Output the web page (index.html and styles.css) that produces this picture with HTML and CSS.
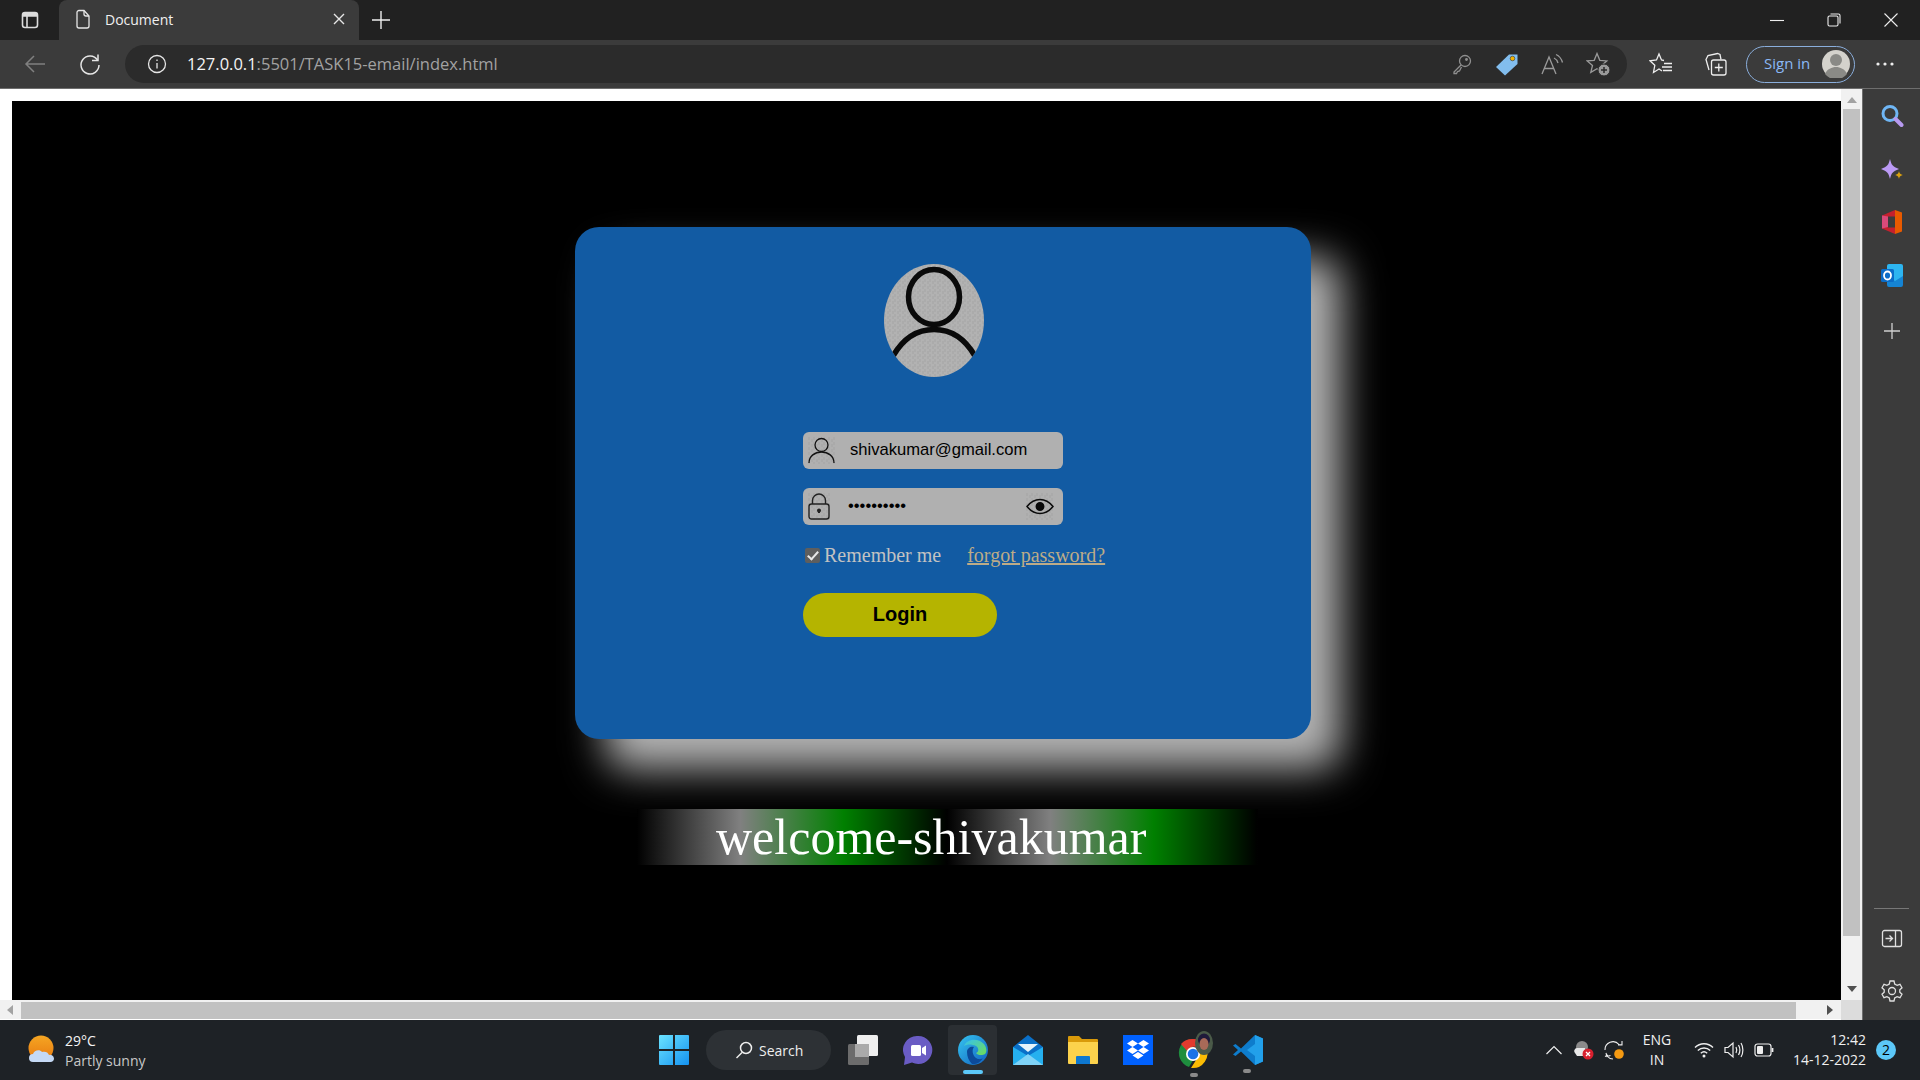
FILE: index.html
```html
<!DOCTYPE html>
<html lang="en">

<head>
    <title>Document</title>
    <meta charset="UTF-8">
    <link rel="stylesheet" href="styles.css">
</head>

<body>
    <div class="tabbar">
        <svg class="tab-toggle" width="20" height="20" viewBox="0 0 20 20" fill="none" stroke="#ddd" stroke-width="1.6"><rect x="2.5" y="2.5" width="15" height="15" rx="2.5"/><path d="M3 6h14M7 6v11" /><path d="M3 3h14v3H3z" fill="#ddd" stroke="none"/></svg>
        <div class="tab">
            <svg width="18" height="20" viewBox="0 0 18 20" fill="none" stroke="#e6e6e6" stroke-width="1.3"><path d="M3 3.5a2 2 0 0 1 2-2h5l5 5.500v10a2 2 0 0 1-2 2H5a2 2 0 0 1-2-2z"/><path d="M10 1.500v3.500a2 2 0 0 0 2 2h3"/></svg>
            <span class="tab-title">Document</span>
            <svg class="tab-close" width="12" height="12" viewBox="0 0 12 12" stroke="#e6e6e6" stroke-width="1.4"><path d="M1 1l10 10M11 1L1 11"/></svg>
        </div>
        <svg class="tab-new" width="20" height="20" viewBox="0 0 20 20" stroke="#eee" stroke-width="1.4"><path d="M10 1v18M1 10h18"/></svg>
        <div class="window-controls">
            <div class="window-btn"><svg width="14" height="14" viewBox="0 0 14 14" stroke="#eee" stroke-width="1.1"><path d="M0 7.500h14"/></svg></div>
            <div class="window-btn"><svg width="14" height="14" viewBox="0 0 14 14" fill="none" stroke="#eee" stroke-width="1.1"><rect x="1" y="3" width="10" height="10" rx="1.500"/><path d="M3.500 1h8a1.500 1.500 0 0 1 1.500 1.500v8"/></svg></div>
            <div class="window-btn"><svg width="14" height="14" viewBox="0 0 14 14" stroke="#eee" stroke-width="1.1"><path d="M.5.5l13 13M13.500.5l-13 13"/></svg></div>
        </div>
    </div>

    <div class="toolbar">
        <svg class="tool-back" width="24" height="24" viewBox="0 0 24 24" fill="none" stroke="#808080" stroke-width="1.500"><path d="M22 12H3M11 4l-8 8 8 8"/></svg>
        <svg class="tool-reload" width="24" height="24" viewBox="0 0 24 24" fill="none" stroke="#e6e6e6" stroke-width="1.500"><path d="M19.500 8A9 9 0 1 0 21 13"/><path d="M20 2.500V8.500h-6"/></svg>
        <div class="address">
            <svg class="address-info" width="20" height="20" viewBox="0 0 20 20" fill="none" stroke="#e6e6e6" stroke-width="1.300"><circle cx="10" cy="10" r="8.500"/><path d="M10 9v5.500M10 5.500v1.500"/></svg>
            <span class="address-host">127.0.0.1</span><span class="address-path">:5501/TASK15-email/index.html</span>
            <div class="address-tools">
                <svg width="24" height="24" viewBox="0 0 24 24" fill="none" stroke="#8f8f8f" stroke-width="1.300"><circle cx="15" cy="9" r="5.500"/><path d="M11 13l-7 7v1.500h2.500l1-2 2-.5 2-4"/><circle cx="16.500" cy="7.500" r=".8" fill="#8f8f8f"/></svg>
                <svg width="24" height="24" viewBox="0 0 24 24"><path d="M1 15L14 2.500h8.500V12L10 23.500z" fill="#82bdee"/><circle cx="17.500" cy="6.500" r="2.300" fill="#f2b200" stroke="#333" stroke-width=".6"/></svg>
                <svg width="24" height="24" viewBox="0 0 24 24" fill="none" stroke="#9a9a9a" stroke-width="1.300"><path d="M1 22L8 5l7 17M3.500 16.500h9"/><path d="M13 6c2 1 3.500 3 4 5M15 2.500c3.500 1.500 5.500 4.500 6.500 8"/></svg>
                <svg width="24" height="24" viewBox="0 0 24 24" fill="none" stroke="#9a9a9a" stroke-width="1.300"><path d="M11 1.500l2.800 6.800 7 .6-5.300 4.600 1.700 6.900L11 16.800l-6.200 3.600 1.700-6.900L1.200 8.900l7-.6z"/><circle cx="18" cy="18" r="6" fill="#9a9a9a" stroke="#2b2b2b" stroke-width="1"/><path d="M18 15v6M15 18h6" stroke="#2b2b2b" stroke-width="1.500"/></svg>
            </div>
        </div>
        <svg class="tool-fav" width="24" height="24" viewBox="0 0 24 24" fill="none" stroke="#eee" stroke-width="1.300"><path d="M15 8.500l-2.500-.5L10 2 7.500 8 1 8.800l4.800 4.500-1.300 7.200 5.500-3.500 3 2"/><path d="M15 11.500h8M13 15h10M14 18.500h9"/></svg>
        <svg class="tool-collect" width="24" height="24" viewBox="0 0 24 24" fill="none" stroke="#eee" stroke-width="1.300"><rect x="7.500" y="8" width="14.500" height="15" rx="2"/><path d="M14.800 11.500v8M10.800 15.500h8"/><path d="M5 18L2 7.500 4 3.500l9.500-2 2.500 1 1 5"/></svg>
        <div class="signin">
            <span class="signin-text">Sign in</span>
            <svg class="signin-avatar" width="28" height="28" viewBox="0 0 28 28"><circle cx="14" cy="14" r="14" fill="#d4d2cc"/><circle cx="14" cy="10" r="6" fill="#8a8a86"/><path d="M3 24c2-5 7-7 11-7s9 2 11 7a14 14 0 0 1-22 0z" fill="#8a8a86"/></svg>
        </div>
        <svg class="tool-more" width="24" height="24" viewBox="0 0 24 24" fill="#eee"><circle cx="5" cy="12" r="1.600"/><circle cx="12" cy="12" r="1.600"/><circle cx="19" cy="12" r="1.600"/></svg>
    </div>

    <div class="main">
        <div class="browser">
            <div class="browser-top">
                <div class="page">
                    <div class="stage">
                        <form class="card">
                            <div class="avatar">
                                <svg width="100" height="113" viewBox="0 0 100 113" fill="none" stroke="#0a0a0a" stroke-width="5.500"><ellipse cx="50" cy="33" rx="25.500" ry="27.500"/><path d="M9 92C20 73 35 65.500 50 65.500S80 73 91 92"/></svg>
                            </div>
                            <label class="field">
                                <svg class="field-icon" width="27" height="27" viewBox="0 0 27 27" fill="none" stroke="#111" stroke-width="1.300"><circle cx="13.500" cy="8" r="6.500"/><path d="M1 26c0-7 6-11 12.500-11S26 19 26 26"/></svg>
                                <input class="field-input" type="text" value="shivakumar@gmail.com">
                            </label>
                            <label class="field">
                                <svg class="field-icon field-icon-lock" width="22" height="27" viewBox="0 0 22 27" fill="none" stroke="#222" stroke-width="1.400"><rect x="1" y="11" width="20" height="15" rx="2.500"/><path d="M4.500 11V7.500a6.500 6.500 0 0 1 13 0V11"/><path d="M11 17v3" stroke-width="2"/><circle cx="11" cy="17.500" r="1.300" fill="#222"/></svg>
                                <input class="field-input field-input-pass" type="password" value="shivakumar">
                                <svg class="field-eye" width="28" height="27" viewBox="0 0 28 27" fill="none" stroke="#0a0a0a" stroke-width="1.500"><path d="M1 13.500C5 8.500 9 6.500 14 6.500s9 2 13 7c-4 5-8 7-13 7s-9-2-13-7z"/><circle cx="14" cy="13.500" r="3.700" fill="#0a0a0a"/></svg>
                            </label>
                            <div class="remember">
                                <input class="remember-check" type="checkbox" checked>
                                <span class="remember-text">Remember me</span>
                                <a class="forgot" href="#">forgot password?</a>
                            </div>
                            <button class="login" type="button">Login</button>
                        </form>
                        <div class="welcome">welcome-shivakumar</div>
                    </div>
                </div>
                <div class="vscroll">
                    <div class="arrow-up"></div>
                    <div class="vthumb"></div>
                    <div class="arrow-down"></div>
                </div>
            </div>
            <div class="hscroll">
                <div class="arrow-left"></div>
                <div class="hthumb"></div>
                <div class="arrow-right"></div>
                <div class="scroll-corner"></div>
            </div>
        </div>
        <div class="sidebar">
            <svg width="24" height="24" viewBox="0 0 24 24" fill="none"><circle cx="10" cy="9.500" r="7" stroke="#6fb6f5" stroke-width="3"/><path d="M15.500 15l6 6" stroke="#b79af0" stroke-width="4" stroke-linecap="round"/></svg>
            <svg class="sidebar-spark" width="24" height="24" viewBox="0 0 24 24"><path d="M10 1c1.500 6 2.500 7.500 9 10-6.500 2.500-7.500 4-9 10-1.500-6-2.500-7.500-9-10 6.500-2.500 7.500-4 9-10z" fill="#bb9af5"/><path d="M19 13c.5 2.500 1 3 4 4-3 1-3.500 1.500-4 4-.5-2.500-1-3-4-4 3-1 3.500-1.500 4-4z" fill="#d9a010"/></svg>
            <svg width="24" height="24" viewBox="0 0 24 24"><path d="M2 5.500L15 0v24L2 18.500z" fill="#c4202e"/><path d="M15 0l7 2.500v19L15 24z" fill="#e85a00"/><path d="M8 6.500h7v11H8z" fill="#3c3c3c"/><path d="M2 5.500L8 6.500v10.500l-6 1.500z" fill="#d94a7a"/></svg>
            <svg width="24" height="24" viewBox="0 0 24 24"><rect x="7" y="1" width="16" height="21" rx="2" fill="#2db5f0"/><path d="M7 13l8 5 8-5v9a2 2 0 0 1-2 2H9a2 2 0 0 1-2-2z" fill="#1584d4"/><rect x="1" y="6" width="13" height="13" rx="1.500" fill="#0a6cc8"/><ellipse cx="7.500" cy="12.500" rx="3.500" ry="4" fill="none" stroke="#fff" stroke-width="1.800"/></svg>
            <svg class="sidebar-plus" width="24" height="24" viewBox="0 0 24 24" stroke="#d0d0d0" stroke-width="1.300"><path d="M12 4v16M4 12h16"/></svg>
            <div class="sidebar-bottom">
                <div class="sidebar-line"></div>
                <svg width="22" height="22" viewBox="0 0 22 22" fill="none" stroke="#e0e0e0" stroke-width="1.300"><rect x="1.500" y="2.500" width="19" height="16" rx="2"/><path d="M14.500 2.500v16"/><path d="M4.500 10.500h7M8.500 7.500l3 3-3 3"/></svg>
                <svg width="24" height="24" viewBox="0 0 24 24" fill="none" stroke="#e0e0e0" stroke-width="1.300"><circle cx="12" cy="12" r="3.500"/><path d="M10 2h4l.7 3 2.400 1.300 2.900-1 2 3.500-2.200 2.100v2.200l2.200 2.100-2 3.500-2.900-1-2.400 1.300-.7 3h-4l-.7-3-2.400-1.300-2.900 1-2-3.500 2.200-2.100v-2.200L2 8.800l2-3.500 2.900 1L9.300 5z"/></svg>
            </div>
        </div>
    </div>

    <div class="taskbar">
        <div class="weather">
            <svg width="30" height="30" viewBox="0 0 30 30"><defs><linearGradient id="sun" x1="0" y1="0" x2="0" y2="1"><stop offset="0" stop-color="#f5a623"/><stop offset="1" stop-color="#e87a10"/></linearGradient></defs><circle cx="13" cy="13" r="12.500" fill="url(#sun)"/><path d="M5 27a4 4 0 0 1 0-8c1-4 7-5 9-2 3-1 6 0 7 3a4 4 0 0 1 5 3.500c0 2-1.500 3.500-3.500 3.500z" fill="#c5d9f5"/></svg>
            <div class="weather-text">
                <div class="weather-temp">29°C</div>
                <div class="weather-desc">Partly sunny</div>
            </div>
        </div>
        <div class="apps">
            <svg class="app-start" width="30" height="30" viewBox="0 0 30 30"><defs><linearGradient id="win" x1="0" y1="0" x2="1" y2="1"><stop offset="0" stop-color="#6be3ff"/><stop offset="1" stop-color="#1492f0"/></linearGradient></defs><path d="M0 1a1 1 0 0 1 1-1h13v14H0zM16 0h13a1 1 0 0 1 1 1v13H16zM0 16h14v14H1a1 1 0 0 1-1-1zM16 16h14v13a1 1 0 0 1-1 1H16z" fill="url(#win)"/></svg>
            <div class="search">
                <svg width="18" height="18" viewBox="0 0 18 18" fill="none" stroke="#eee" stroke-width="1.500"><circle cx="11" cy="7" r="5.500"/><path d="M7 11.500L1.500 17"/></svg>
                <span>Search</span>
            </div>
            <svg class="app-taskview" width="30" height="30" viewBox="0 0 30 30"><rect x="0" y="9" width="21" height="21" rx="1.500" fill="#6c6c6c"/><rect x="9" y="0" width="21" height="21" rx="1.500" fill="#efefef"/><rect x="7" y="9" width="14" height="13" fill="#aaa"/></svg>
            <svg class="app-teams" width="30" height="30" viewBox="0 0 30 30"><path d="M15 1a14 14 0 1 1-6 26.500L1 30l1-8A14 14 0 0 1 15 1z" fill="#6a5cc4"/><rect x="8" y="10" width="10" height="11" rx="1.500" fill="#fff"/><path d="M19 13l4-2.500v10L19 18z" fill="#fff"/></svg>
            <div class="app-edge">
                <svg width="30" height="30" viewBox="0 0 30 30"><defs><linearGradient id="edge" x1="0" y1="0" x2="1" y2="1"><stop offset="0" stop-color="#36c5f0"/><stop offset="1" stop-color="#1060c0"/></linearGradient><linearGradient id="edge2" x1="0" y1="0" x2="1" y2="1"><stop offset="0" stop-color="#35c1f1"/><stop offset="1" stop-color="#6fdd55"/></linearGradient></defs><circle cx="15" cy="15" r="15" fill="url(#edge)"/><path d="M6 11C8 4 20 2 26 9c3 4 3 8 1 10-3 2-8 1-9-1 3-1 3-5 0-7-4-2-9-2-12 0z" fill="url(#edge2)"/><path d="M9 17c0-4 4-6 7-5-2 2-2 8 2 11 3 2 6 1 7 0-3 5-8 7-11 6-3-3-5-7-5-12z" fill="#0c4a9a"/></svg>
                <div class="app-active"></div>
            </div>
            <svg class="app-mail" width="30" height="30" viewBox="0 0 30 30"><path d="M0 12L15 0l15 12v17H0z" fill="#0a70c8"/><path d="M0 12l15 9 15-9v18H0z" fill="#25b0ef"/><path d="M5 9h20l-10 8z" fill="#e5f3fb"/><path d="M0 30l15-11 15 11z" fill="#7fd3f7"/></svg>
            <svg class="app-folder" width="30" height="30" viewBox="0 0 30 30"><path d="M0 2a1 1 0 0 1 1-1h10l3 3h15a1 1 0 0 1 1 1v5H0z" fill="#d99a0a"/><path d="M0 7h30v21a1 1 0 0 1-1 1H1a1 1 0 0 1-1-1z" fill="#fcd24c"/><path d="M9 21h12a1 1 0 0 1 1 1v7H8v-7a1 1 0 0 1 1-1z" fill="#0e78d0"/></svg>
            <svg class="app-dropbox" width="30" height="30" viewBox="0 0 30 30"><rect width="30" height="30" fill="#0061fe"/><path d="M9.500 5l5.500 3.500L9.500 12 4 8.500zM20.500 5L26 8.500 20.500 12 15 8.500zM9.500 12l5.500 3.500L9.500 19 4 15.500zM20.500 12l5.500 3.500-5.500 3.500-5.500-3.500zM15 17l5.500 3.500L15 24l-5.500-3.500z" fill="#fff"/></svg>
            <div class="app-chrome">
                <svg width="36" height="38" viewBox="0 0 36 38"><path d="M15 8a15 15 0 0 1 13 7.500H15z" fill="#e33b2e"/><path d="M2.500 15A15 15 0 0 0 11 36l6-10-8-5z" fill="#1e8e3e"/><path d="M28 15.500A15 15 0 0 1 13 37l7-11 1-10.500z" fill="#fbbc04"/><path d="M15 8a15 15 0 0 0-12.500 7l7 7.500L15 15.500z" fill="#1e8e3e"/><path d="M15 8a15 15 0 0 1 12.500 7.500H15L9 20 3 13A15 15 0 0 1 15 8z" fill="#e33b2e"/><circle cx="15" cy="23" r="7" fill="#fff"/><circle cx="15" cy="23" r="5.300" fill="#1a73e8"/><ellipse cx="26" cy="12" rx="9" ry="12" fill="#4a5a48"/><ellipse cx="26" cy="9" rx="6" ry="6.500" fill="#1f1a3a"/><ellipse cx="26" cy="13" rx="4.500" ry="6" fill="#a86a58"/></svg>
                <div class="app-dot"></div>
            </div>
            <div class="app-vscode">
                <svg width="31" height="30" viewBox="0 0 31 30"><path d="M22 0l8 3.500v23L22 30 8 16.500 2.500 21 0 19.500 5 15 0 10.500 2.500 9 8 13.500z" fill="#0e7ccc"/><path d="M22 0l8 3.500v23L22 30V21l-8-6 8-6z" fill="#22a0ea"/></svg>
                <div class="app-dot"></div>
            </div>
        </div>
        <div class="tray">
            <svg class="tray-chevron" width="16" height="10" viewBox="0 0 16 10" fill="none" stroke="#eee" stroke-width="1.200"><path d="M.5 9L8 1.500 15.500 9"/></svg>
            <svg class="tray-cloud" width="20" height="20" viewBox="0 0 20 20"><circle cx="8" cy="7" r="6" fill="#8a8a8a"/><path d="M1 13a3 3 0 0 1 2-5h8v8H3z" fill="#e8e8e8"/><circle cx="14" cy="14" r="5.500" fill="#d8202e"/><path d="M12 12l4 4M16 12l-4 4" stroke="#fff" stroke-width="1.300"/></svg>
            <svg class="tray-sync" width="20" height="20" viewBox="0 0 20 20" fill="none" stroke="#eee" stroke-width="1.100"><path d="M1 10a8 8 0 0 1 14-5.500l3 .5M18 1v4h-4"/><path d="M4 15l-3 1.500M2 13l1 3.500 3.500-1M3 16a8 8 0 0 0 6 3"/><circle cx="15" cy="14" r="4.800" fill="#f59a12" stroke="none"/></svg>
            <div class="tray-lang"><div>ENG</div><div>IN</div></div>
            <svg class="tray-wifi" width="20" height="16" viewBox="0 0 20 16" fill="none" stroke="#eee" stroke-width="1.400"><path d="M1 5.500c5-5 13-5 18 0M3.800 8.500c3.500-3.300 9-3.300 12.400 0M6.800 11.200c2-1.700 4.400-1.700 6.400 0"/><circle cx="10" cy="14" r="1.500" fill="#eee" stroke="none"/></svg>
            <svg class="tray-sound" width="20" height="18" viewBox="0 0 20 18" fill="none" stroke="#eee" stroke-width="1.200"><path d="M1 6.500h3L9 2v14l-5-4.500H1z"/><path d="M12 6c1 2 1 4 0 6M14.500 4c1.700 3 1.700 7 0 10M17 2c2.500 4 2.500 10 0 14"/></svg>
            <svg class="tray-battery" width="20" height="14" viewBox="0 0 20 14" fill="none" stroke="#eee" stroke-width="1.200"><rect x="1" y="1" width="16" height="12" rx="2.500"/><rect x="3" y="3" width="6" height="8" rx="1" fill="#eee" stroke="none"/><path d="M18.500 5v4" stroke-width="1.800"/></svg>
            <div class="tray-clock"><div>12:42</div><div>14-12-2022</div></div>
            <div class="tray-badge">2</div>
        </div>
    </div>
</body>

</html>
```

FILE: styles.css
```css
* {
    box-sizing: border-box;
}

html,
body {
    height: 100%;
}

body {
    margin: 0;
    height: 1080px;
    overflow: hidden;
    display: flex;
    flex-direction: column;
    background: #000;
    font-family: "Open Sans", "Noto Sans", sans-serif;
    color: #eee;
}

svg {
    display: block;
    flex: none;
}

/* browser tabs */
.tabbar {
    height: 40px;
    background: #212121;
    display: flex;
    align-items: center;
}

.tab-toggle {
    margin-left: 20px;
}

.tab {
    height: 40px;
    width: 300px;
    margin-left: 19px;
    padding: 0 14px 2px 15px;
    background: #3b3b3b;
    border-radius: 8px 8px 0 0;
    display: flex;
    align-items: center;
}

.tab-title {
    margin-left: 13px;
    font-size: 14px;
    color: #f0f0f0;
}

.tab-close {
    margin-left: auto;
}

.tab-new {
    margin-left: 12px;
}

.window-controls {
    margin-left: auto;
    padding-right: 1px;
    display: flex;
}

.window-btn {
    width: 57px;
    height: 40px;
    display: flex;
    align-items: center;
    justify-content: center;
}

/* address bar */
.toolbar {
    height: 49px;
    background: #3b3b3b;
    border-bottom: 1px solid #6e6e6e;
    display: flex;
    align-items: center;
}

.tool-back {
    margin-left: 23px;
}

.tool-reload {
    margin-left: 31px;
}

.address {
    width: 1502px;
    height: 38px;
    margin-left: 23px;
    padding: 0 17px 0 22px;
    background: #2b2b2b;
    border-radius: 19px;
    display: flex;
    align-items: center;
    font-size: 16.500px;
}

.address-info {
    margin-right: 20px;
}

.address-host {
    margin-bottom: 2px;
    color: #f4f4f4;
}

.address-path {
    margin-bottom: 2px;
    color: #a2a2a2;
}

.address-tools {
    margin-left: auto;
    display: flex;
    gap: 21.500px;
}

.tool-fav {
    margin-left: 22px;
}

.tool-collect {
    margin-left: 31px;
}

.signin {
    width: 109px;
    height: 37px;
    margin-left: 18px;
    padding: 0 4px 0 17px;
    border: 1px solid #8aaedc;
    border-radius: 19px;
    display: flex;
    align-items: center;
    justify-content: space-between;
    font-size: 15px;
    color: #8ab8f5;
}

.signin-text {
    margin-bottom: 2px;
}

.tool-more {
    margin-left: 18px;
}

/* page + scrollbars */
.main {
    height: 931px;
    display: flex;
}

.browser {
    width: 1862px;
    display: flex;
    flex-direction: column;
}

.browser-top {
    height: 911px;
    display: flex;
}

.page {
    width: 1841px;
    padding: 12px 0 0 12px;
    background: #fff;
}

.stage {
    height: 899px;
    background: #000;
    overflow: hidden;
}

.card {
    width: 736px;
    height: 512px;
    margin: 126px 0 0 563px;
    padding: 37px 0 0 228px;
    background: #125ba3;
    border-radius: 24px;
    box-shadow: 30px 30px 40px #b4b4b4;
}

.avatar {
    width: 100px;
    height: 113px;
    margin-left: 81px;
    margin-bottom: 55px;
    border-radius: 50%;
    overflow: hidden;
    background: repeating-conic-gradient(#b2b2b2 0 25%, #ababab 0 50%) 0 0 / 5px 5px;
}

.field {
    width: 260px;
    height: 37px;
    margin-bottom: 19px;
    padding: 0 9px 0 5px;
    background: #b0b0b0;
    border-radius: 6px;
    display: flex;
    align-items: center;
}

.field-icon,
.field-eye {
    background: repeating-conic-gradient(#b0b0b0 0 25%, #aaa 0 50%) 0 0 / 5px 5px;
}

.field-input {
    flex: 1;
    min-width: 0;
    height: 100%;
    margin-left: 15px;
    padding: 0 0 2px;
    border: 0;
    outline: 0;
    background: none;
    font-family: "Liberation Sans", Arial, sans-serif;
    font-size: 16.600px;
    color: #000;
}

.field-input-pass {
    margin-left: 18px;
}

.remember {
    margin: 21px 0 0 2px;
    height: 18px;
    display: flex;
    align-items: center;
    font-family: "Liberation Serif", "Times New Roman", serif;
    font-size: 20px;
    color: #c2c2c2;
}

.remember-check {
    appearance: none;
    width: 15px;
    height: 15px;
    margin: 0 4px 0 0;
    background: #5e5e5e;
    border-radius: 2px;
    display: flex;
    align-items: center;
    justify-content: center;
}

.remember-check::after {
    content: "";
    width: 4px;
    height: 9px;
    margin-top: -2px;
    border: solid #e8e8e8;
    border-width: 0 2.500px 2.500px 0;
    transform: rotate(42deg);
}

.forgot {
    margin-left: 26px;
    color: #bcab88;
}

.login {
    display: block;
    width: 194px;
    height: 44px;
    margin-top: 29px;
    padding: 0 0 2px;
    border: 0;
    border-radius: 22px;
    background: #b5b400;
    font-family: "Liberation Sans", Arial, sans-serif;
    font-size: 20px;
    font-weight: bold;
    color: #000;
}

.welcome {
    width: 621px;
    height: 56px;
    margin: 70px 0 0 625px;
    padding-left: 79px;
    background: linear-gradient(to right, #000, #808080, #008000, #000) 0 0 / 310px 100%;
    font-family: "Liberation Serif", "Times New Roman", serif;
    font-size: 50px;
    line-height: 56px;
    color: #fff;
}

.vscroll {
    width: 21px;
    padding: 0 2px;
    background: #f1f1f1;
    display: flex;
    flex-direction: column;
    align-items: center;
}

.vthumb {
    width: 17px;
    height: 827px;
    margin: 6px 0 50px;
    background: #c1c1c1;
}

.arrow-up,
.arrow-down {
    width: 0;
    height: 0;
    border-left: 5px solid transparent;
    border-right: 5px solid transparent;
}

.arrow-up {
    margin-top: 8px;
    border-bottom: 6px solid #a3a3a3;
}

.arrow-down {
    border-top: 6px solid #505050;
}

.hscroll {
    height: 20px;
    background: #f1f1f1;
    border-bottom: 1px solid #fff;
    display: flex;
    align-items: center;
    position: relative;
}

.arrow-left,
.arrow-right {
    width: 0;
    height: 0;
    border-top: 5px solid transparent;
    border-bottom: 5px solid transparent;
}

.arrow-left {
    margin-left: 7px;
    border-right: 6px solid #a3a3a3;
}

.hthumb {
    width: 1775px;
    height: 17px;
    margin: 2px 0 0 8px;
    background: #c1c1c1;
}

.arrow-right {
    margin-left: 31px;
    border-left: 6px solid #505050;
}

.scroll-corner {
    width: 21px;
    height: 20px;
    margin-left: auto;
    background: #dcdcdc;
}

/* edge sidebar */
.sidebar {
    width: 58px;
    padding-top: 15px;
    background: #3b3b3b;
    border-left: 1px solid #6e6e6e;
    display: flex;
    flex-direction: column;
    align-items: center;
    gap: 29px;
}

.sidebar-spark {
    margin-top: 1px;
    margin-bottom: -1px;
}

.sidebar-plus {
    margin-top: 3px;
}

.sidebar-bottom {
    margin-top: auto;
    padding-bottom: 17px;
    display: flex;
    flex-direction: column;
    align-items: center;
}

.sidebar-line {
    width: 35px;
    height: 1px;
    margin-bottom: 19px;
    background: #777;
}

.sidebar-bottom svg + svg {
    margin-top: 29px;
}

/* windows taskbar */
.taskbar {
    height: 60px;
    background: #1e2226;
    display: flex;
    align-items: center;
    font-size: 14px;
}

.weather {
    width: 659px;
    padding-left: 28px;
    display: flex;
    align-items: center;
    gap: 7px;
}

.weather-text {
    padding-top: 2px;
    line-height: 20px;
}

.weather-temp {
    color: #f5f5f5;
}

.weather-desc {
    color: #c8c8c8;
}

.apps {
    display: flex;
    align-items: center;
}

.search {
    width: 125px;
    height: 40px;
    margin-left: 17px;
    padding-left: 29px;
    background: #2d3135;
    border-radius: 20px;
    display: flex;
    align-items: center;
    gap: 6px;
    color: #eee;
}

.app-taskview {
    margin-left: 17px;
}

.app-teams {
    margin-left: 25px;
}

.app-edge {
    width: 49px;
    height: 50px;
    margin-left: 15px;
    padding-top: 10px;
    background: #2b2f33;
    border-radius: 4px;
    display: flex;
    flex-direction: column;
    align-items: center;
}

.app-active {
    width: 20px;
    height: 4px;
    margin-top: 5px;
    background: #5cc8f8;
    border-radius: 2px;
}

.app-mail {
    margin-left: 16px;
}

.app-folder,
.app-dropbox {
    margin-left: 25px;
}

.app-chrome {
    margin-left: 25px;
    position: relative;
    width: 36px;
}

.app-vscode {
    margin-left: 19px;
    position: relative;
    width: 31px;
}

.app-dot {
    position: absolute;
    left: 50%;
    bottom: -8px;
    width: 8px;
    height: 4px;
    margin-left: -6px;
    background: #8a8a8a;
    border-radius: 2px;
}

.tray {
    margin-left: auto;
    padding-right: 24px;
    display: flex;
    align-items: center;
    color: #f0f0f0;
}

.tray-cloud {
    margin-left: 12px;
}

.tray-sync {
    margin-left: 10px;
}

.tray-lang {
    width: 30px;
    margin-left: 18px;
    text-align: center;
    line-height: 20px;
}

.tray-wifi {
    margin-left: 22px;
}

.tray-sound {
    margin-left: 10px;
}

.tray-battery {
    margin-left: 10px;
}

.tray-clock {
    width: 92px;
    text-align: right;
    line-height: 20px;
}

.tray-badge {
    width: 20px;
    height: 20px;
    margin-left: 10px;
    background: #5cc8f8;
    border-radius: 50%;
    text-align: center;
    line-height: 20px;
    color: #000;
}
```
